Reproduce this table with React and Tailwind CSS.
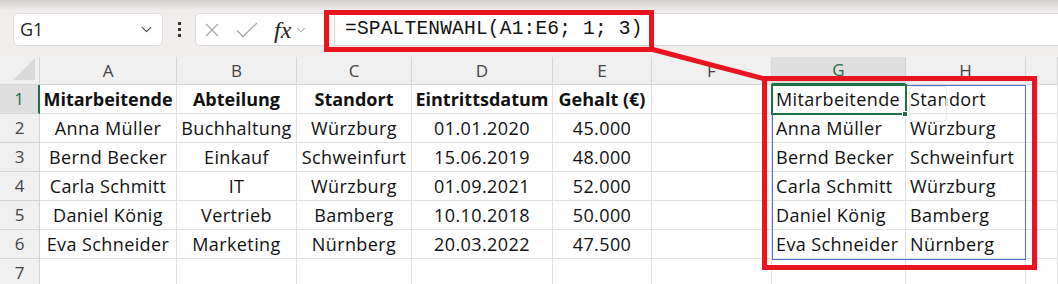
import { ChevronDown } from 'lucide-react';

const COLS = [
  { id: 'A', w: 'w-[137px]' },
  { id: 'B', w: 'w-[120px]' },
  { id: 'C', w: 'w-[115px]' },
  { id: 'D', w: 'w-[141px]' },
  { id: 'E', w: 'w-[99px]' },
  { id: 'F', w: 'w-[120px]' },
  { id: 'G', w: 'w-[134px]' },
  { id: 'H', w: 'w-[120px]' },
  { id: '', w: 'flex-1' },
];

const DATA = [
  ['Mitarbeitende', 'Abteilung', 'Standort', 'Eintrittsdatum', 'Gehalt (€)'],
  ['Anna Müller', 'Buchhaltung', 'Würzburg', '01.01.2020', '45.000'],
  ['Bernd Becker', 'Einkauf', 'Schweinfurt', '15.06.2019', '48.000'],
  ['Carla Schmitt', 'IT', 'Würzburg', '01.09.2021', '52.000'],
  ['Daniel König', 'Vertrieb', 'Bamberg', '10.10.2018', '50.000'],
  ['Eva Schneider', 'Marketing', 'Nürnberg', '20.03.2022', '47.500'],
  [],
];

function cellText(r, c) {
  const row = DATA[r];
  if (!row || row.length === 0) return '';
  if (c < 5) return row[c];
  if (c === 6) return row[0];
  if (c === 7) return row[2];
  return '';
}

export default function App() {
  return (
    <div className="relative w-[1058px] h-[284px] overflow-hidden bg-white text-[#111] font-['Open_Sans',sans-serif]">
      {/* formula bar */}
      <div className="h-[57px] bg-gradient-to-b from-[#d2cfcf] via-[#f1eded] via-[18%] to-[#f2eeee] flex items-start pt-[13px]">
        <div className="ml-[13px] w-[150px] h-[33px] bg-white rounded-[5px] border border-[#dcdcdc] flex items-center justify-between pl-[6px] pr-[7px]">
          <span className="text-[18px] text-[#222]">G1</span>
          <ChevronDown className="w-[17px] h-[17px] text-[#444]" strokeWidth={1.6} />
        </div>
        <div className="w-[32px] h-[33px] flex flex-col items-center justify-center gap-[3px]">
          <span className="w-[3px] h-[3px] bg-[#333]" />
          <span className="w-[3px] h-[3px] bg-[#333]" />
          <span className="w-[3px] h-[3px] bg-[#333]" />
        </div>
        <div className="w-[140px] h-[33px] bg-white rounded-l-[5px] border border-[#dcdcdc] flex items-center pl-[9px]">
          <svg width="14" height="14" viewBox="0 0 14 14" className="text-[#a8a8a8]">
            <path d="M1 1L13 13M13 1L1 13" stroke="currentColor" strokeWidth="1.3" fill="none" />
          </svg>
          <svg width="22" height="16" viewBox="0 0 22 16" className="ml-[17px] text-[#a8a8a8]">
            <path d="M1 8.5L7 14.5L21 1" stroke="currentColor" strokeWidth="1.3" fill="none" />
          </svg>
          <span className="ml-[16px] italic text-[24px] leading-none font-['Liberation_Serif',serif] text-[#222]">fx</span>
          <ChevronDown className="ml-[3px] w-[14px] h-[14px] text-[#888]" strokeWidth={1.5} />
        </div>
        <div className="flex-1 h-[33px] bg-white border-y border-[#d4d4d4] flex items-center pl-[10px]">
          <span className="font-['Liberation_Mono',monospace] text-[19.5px] text-[#111] tracking-[0.2px]">=SPALTENWAHL(A1:E6; 1; 3)</span>
        </div>
      </div>

      {/* column header */}
      <div className="flex h-[28px] bg-[#f0f0f0]">
        <div className="w-[40px] border-r border-b border-[#d4d4d4] relative">
          <div className="absolute right-[4px] bottom-[4px] w-0 h-0 border-l-[22px] border-l-transparent border-b-[22px] border-b-[#dadada]" />
        </div>
        {COLS.map((c, i) => (
          <div
            key={i}
            className={`${c.w} border-r border-b flex items-center justify-center text-[17px] ${
              c.id === 'G'
                ? 'bg-[#dfdfdf] text-[#1e7145] border-b-[#1e7145] border-b-2 border-r-[#cfcfcf]'
                : 'text-[#444] border-[#d6d6d6]'
            }`}
          >
            {c.id}
          </div>
        ))}
      </div>

      {/* rows */}
      {DATA.map((row, r) => (
        <div key={r} className="flex h-[29px]">
          <div
            className={`w-[40px] flex items-center justify-center text-[17px] border-b ${
              r === 0
                ? 'bg-[#dfdfdf] text-[#1e7145] border-r-2 border-r-[#1e7145] border-b-[#d4d4d4]'
                : 'bg-[#f0f0f0] text-[#444] border-r border-[#d4d4d4]'
            }`}
          >
            {r + 1}
          </div>
          {COLS.map((c, ci) => (
            <div
              key={ci}
              className={`${c.w} border-r border-b border-[#e1e1e1] flex items-center whitespace-nowrap overflow-visible text-[18px] ${
                ci < 5 ? 'justify-center' : 'justify-start pl-[4px]'
              } ${r === 0 && ci < 5 ? 'font-bold tracking-[0px]' : 'tracking-[0.4px]'}`}
            >
              {cellText(r, ci)}
            </div>
          ))}
        </div>
      ))}

      {/* spill range outline */}
      <div className="absolute left-[772px] top-[85px] w-[254px] h-[175px] border border-[#4a72c8] pointer-events-none" />
      {/* active cell */}
      <div className="absolute left-[771px] top-[84px] w-[136px] h-[31px] border-2 border-[#1e7145] pointer-events-none" />
      <div className="absolute left-[902px] top-[111px] w-[6px] h-[6px] bg-[#1e7145] border border-white" />
      <div className="absolute left-[909px] top-[86px] w-[38px] h-[36px] rounded-[5px] border border-[#e6e6e6] pointer-events-none" />

      {/* annotations */}
      <div className="absolute left-[324px] top-[10px] w-[330px] h-[42px] border-[5px] border-[#e8141f]" />
      <div className="absolute left-[762px] top-[76px] w-[275px] h-[194px] border-[5px] border-[#e8141f]" />
      <svg className="absolute left-0 top-0 pointer-events-none" width="1058" height="284">
        <line x1="651" y1="49" x2="765" y2="79" stroke="#e8141f" strokeWidth="5" />
      </svg>
    </div>
  );
}
